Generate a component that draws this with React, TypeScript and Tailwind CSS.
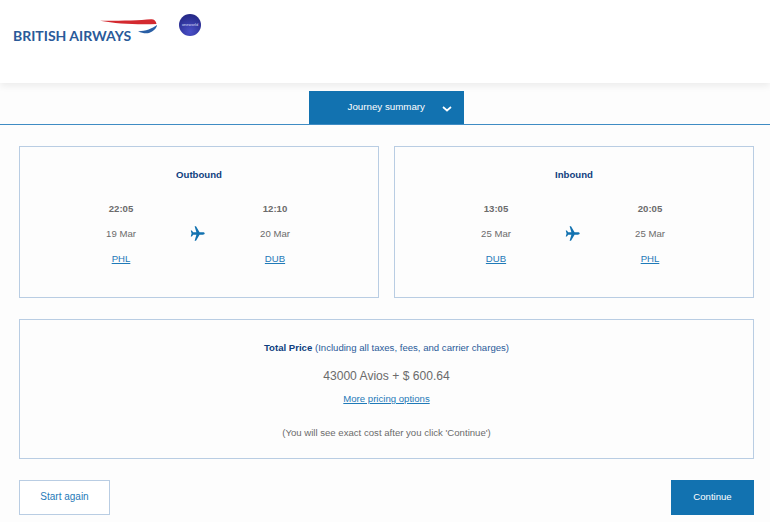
const font = { fontFamily: '"Liberation Sans", Arial, sans-serif' };

function Plane() {
  return (
    <svg width="15" height="15" viewBox="0 0 24 24" className="fill-[#1272b0] mr-[2px]">
      <path d="M23.500 12c0-1-1.200-1.900-3-1.900h-5.200L9.600 0.500H7.400l2.800 9.600H5.100L3 7.300H1.200l1.300 4.700-1.300 4.700H3l2.100-2.800h5.100L7.400 23.500h2.200l5.700-9.600h5.200c1.800 0 3-.9 3-1.900z" />
    </svg>
  );
}

function Leg({ title, dep, arr }: { title: string; dep: string[]; arr: string[] }) {
  const Col = ({ d }: { d: string[] }) => (
    <div className="w-[80px] flex flex-col items-center text-[9.600px] text-[#6b6b6b]">
      <div className="h-[13px] leading-[13px] font-bold">{d[0]}</div>
      <div className="h-[13px] leading-[13px] mt-3">{d[1]}</div>
      <a className="h-[13px] leading-[13px] mt-3 text-[#1f7ab8] underline">{d[2]}</a>
    </div>
  );
  return (
    <div className="flex-1 h-[152px] border border-[#b9cde3] flex flex-col items-center pt-[21px]">
      <div className="h-[13px] leading-[13px] text-[9.600px] font-bold text-[#0f3f7f]">{title}</div>
      <div className="w-[234px] -ml-[2px] mt-[21px] flex justify-between items-center">
        <Col d={dep} />
        <Plane />
        <Col d={arr} />
      </div>
    </div>
  );
}

export default function App() {
  return (
    <div className="w-[770px] h-[522px] overflow-hidden bg-[#fdfdfd] relative" style={font}>
      <header className="h-[83px] bg-white flex items-start pl-[13px] pt-[14px] shadow-[0_3px_7px_rgba(0,0,0,0.07)]">
        <div className="relative w-[150px] h-[32px]">
          <svg width="60" height="16" viewBox="0 0 60 16" className="absolute left-[86px] top-[5px]">
            <path d="M1 1.800C20 2 40 1.200 52 .2c3-.2 5 1.500 5.500 4.800C40 5.800 18 5 1 1.800z" fill="#d3292f" />
            <path d="M58 6c-.2 3-3.500 6.500-8 8-3.500.5-7 .2-11-1.800C46 12.400 53 9.600 58 6z" fill="#2a5fa5" />
          </svg>
          <div
            className="absolute left-0 top-[15px] h-[14px] leading-[14px] text-[14px] font-bold text-[#2a5a99] whitespace-nowrap"
            style={{ fontFamily: 'Lato, sans-serif' }}
          >
            BRITISH AIRWAYS
          </div>
        </div>
        <div className="ml-[16px] w-[22px] h-[22px] rounded-full bg-[radial-gradient(circle_at_50%_80%,#4a50c8,#1c1f78)] flex items-center justify-center overflow-hidden">
          <span className="text-[4px] leading-[4px] text-[#d8dcf5] whitespace-nowrap">oneworld</span>
        </div>
      </header>

      <div className="mt-[8px] h-[33px] flex justify-center border-b border-[#3f8cc4] box-content">
        <div className="w-[155px] h-[33px] ml-[2px] bg-[#1272b0] text-white text-[9.750px] flex items-center pl-[39px]">
          <span>Journey summary</span>
          <svg width="10" height="6" viewBox="0 0 10 6" className="ml-[17px] mt-[3px]">
            <path d="M1 1l4 3.500L9 1" fill="none" stroke="#fff" strokeWidth="1.700" />
          </svg>
        </div>
      </div>

      <main className="pl-[19px] pr-[16px]">
        <div className="mt-[21px] flex gap-[15px]">
          <Leg title="Outbound" dep={['22:05', '19 Mar', 'PHL']} arr={['12:10', '20 Mar', 'DUB']} />
          <Leg title="Inbound" dep={['13:05', '25 Mar', 'DUB']} arr={['20:05', '25 Mar', 'PHL']} />
        </div>

        <div className="mt-[21px] h-[140px] border border-[#b9cde3] flex flex-col items-center pt-[21px]">
          <div className="h-[13px] leading-[13px] text-[9.600px] text-[#2a5a99]">
            <b className="text-[#0f3f7f]">Total Price</b> (Including all taxes, fees, and carrier charges)
          </div>
          <div className="mt-[14px] h-[16px] leading-[16px] text-[12.100px] text-[#6b6b6b]">43000 Avios + $ 600.64</div>
          <a className="mt-[8px] h-[13px] leading-[13px] text-[9.600px] text-[#1f7ab8] underline">More pricing options</a>
          <div className="mt-[21px] h-[13px] leading-[13px] text-[9.600px] text-[#6b6b6b]">(You will see exact cost after you click 'Continue')</div>
        </div>

        <div className="mt-[21px] flex justify-between">
          <button className="w-[91px] h-[35px] pb-[2px] border border-[#b9cde3] bg-white text-[#1f7ab8] text-[10px]">Start again</button>
          <button className="w-[83px] h-[35px] bg-[#1272b0] text-white text-[9.600px]">Continue</button>
        </div>
      </main>
    </div>
  );
}
